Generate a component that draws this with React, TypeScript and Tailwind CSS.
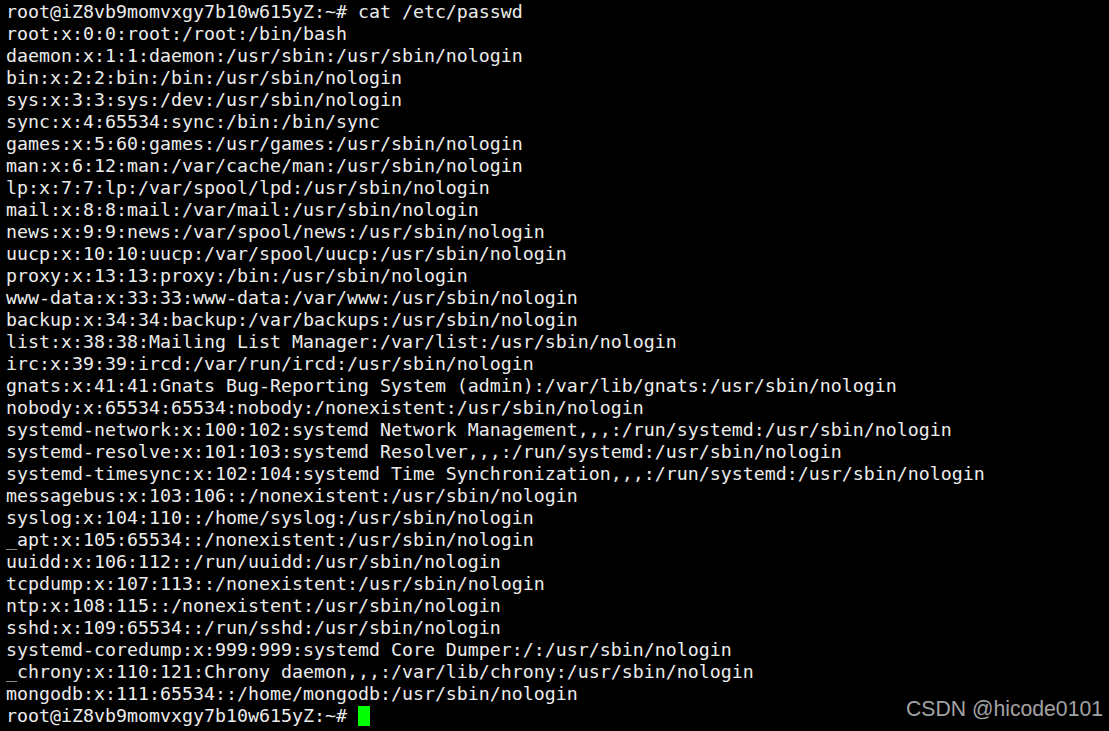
import React from "react";

const lines = [
  "root@iZ8vb9momvxgy7b10w615yZ:~# cat /etc/passwd",
  "root:x:0:0:root:/root:/bin/bash",
  "daemon:x:1:1:daemon:/usr/sbin:/usr/sbin/nologin",
  "bin:x:2:2:bin:/bin:/usr/sbin/nologin",
  "sys:x:3:3:sys:/dev:/usr/sbin/nologin",
  "sync:x:4:65534:sync:/bin:/bin/sync",
  "games:x:5:60:games:/usr/games:/usr/sbin/nologin",
  "man:x:6:12:man:/var/cache/man:/usr/sbin/nologin",
  "lp:x:7:7:lp:/var/spool/lpd:/usr/sbin/nologin",
  "mail:x:8:8:mail:/var/mail:/usr/sbin/nologin",
  "news:x:9:9:news:/var/spool/news:/usr/sbin/nologin",
  "uucp:x:10:10:uucp:/var/spool/uucp:/usr/sbin/nologin",
  "proxy:x:13:13:proxy:/bin:/usr/sbin/nologin",
  "www-data:x:33:33:www-data:/var/www:/usr/sbin/nologin",
  "backup:x:34:34:backup:/var/backups:/usr/sbin/nologin",
  "list:x:38:38:Mailing List Manager:/var/list:/usr/sbin/nologin",
  "irc:x:39:39:ircd:/var/run/ircd:/usr/sbin/nologin",
  "gnats:x:41:41:Gnats Bug-Reporting System (admin):/var/lib/gnats:/usr/sbin/nologin",
  "nobody:x:65534:65534:nobody:/nonexistent:/usr/sbin/nologin",
  "systemd-network:x:100:102:systemd Network Management,,,:/run/systemd:/usr/sbin/nologin",
  "systemd-resolve:x:101:103:systemd Resolver,,,:/run/systemd:/usr/sbin/nologin",
  "systemd-timesync:x:102:104:systemd Time Synchronization,,,:/run/systemd:/usr/sbin/nologin",
  "messagebus:x:103:106::/nonexistent:/usr/sbin/nologin",
  "syslog:x:104:110::/home/syslog:/usr/sbin/nologin",
  "_apt:x:105:65534::/nonexistent:/usr/sbin/nologin",
  "uuidd:x:106:112::/run/uuidd:/usr/sbin/nologin",
  "tcpdump:x:107:113::/nonexistent:/usr/sbin/nologin",
  "ntp:x:108:115::/nonexistent:/usr/sbin/nologin",
  "sshd:x:109:65534::/run/sshd:/usr/sbin/nologin",
  "systemd-coredump:x:999:999:systemd Core Dumper:/:/usr/sbin/nologin",
  "_chrony:x:110:121:Chrony daemon,,,:/var/lib/chrony:/usr/sbin/nologin",
  "mongodb:x:111:65534::/home/mongodb:/usr/sbin/nologin",
];

export default function App() {
  return (
    <div className="relative w-[1109px] h-[731px] bg-black overflow-hidden">
      <div className="pt-[1px] pl-[6px] font-['DejaVu_Sans_Mono',monospace] text-[18.27px] leading-[22px] text-[#ececec] whitespace-pre">
        {lines.map((l, i) => (
          <div key={i}>{l}</div>
        ))}
        <div className="flex items-center">
          <span>root@iZ8vb9momvxgy7b10w615yZ:~# </span>
          <span className="inline-block w-[12px] h-[20px] bg-[#00ff00]" />
        </div>
      </div>
      <div className="absolute right-[6px] bottom-[6px] font-['Liberation_Sans',Arial,sans-serif] text-[21.2px] text-[#a3a3a3]">
        CSDN @hicode0101
      </div>
    </div>
  );
}
